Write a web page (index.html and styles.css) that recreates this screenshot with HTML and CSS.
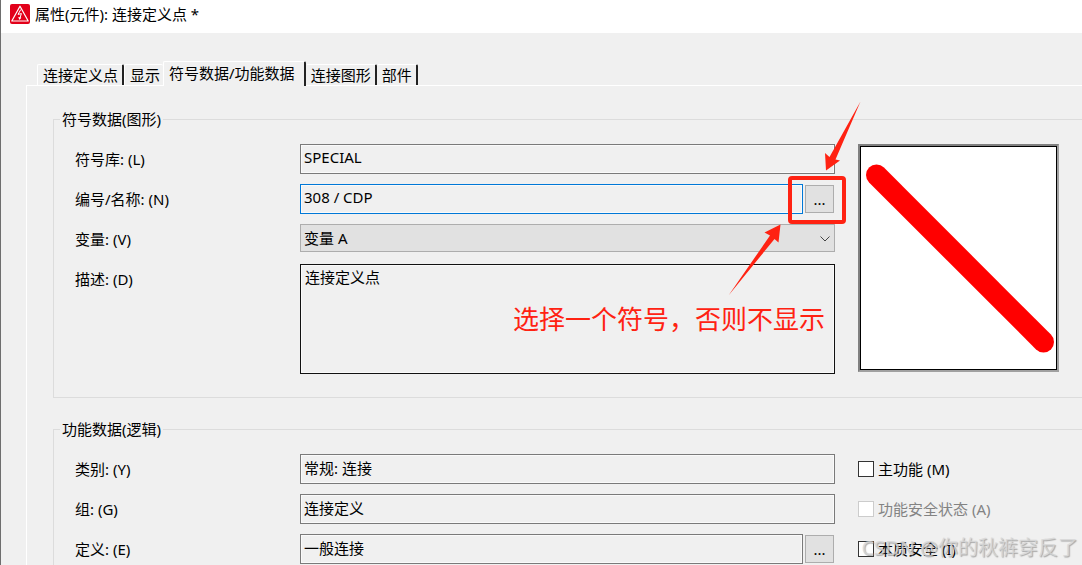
FILE: index.html
```html
<!DOCTYPE html>
<html lang="zh-CN">
<head>
    <meta charset="UTF-8">
    <meta name="viewport" content="width=device-width, initial-scale=1.0">
    <title>属性(元件): 连接定义点 *</title>
    <link rel="stylesheet" href="styles.css">
</head>
<body>
    <div class="dialog">
        <header class="title-bar">
            <svg class="app-icon" width="20" height="20" viewBox="0 0 20 20">
                <rect width="20" height="20" rx="2" fill="#e2001a"></rect>
                <path d="M10 2.2 L18.2 17 H1.8 Z" fill="none" stroke="#fff" stroke-width="1.2" stroke-linejoin="round"></path>
                <path d="M10.8 5.5 L8 10.4 L11.4 9.6 L9.6 15" fill="none" stroke="#fff" stroke-width="1"></path>
                <path d="M8.2 13 L9.5 16 L11.3 13.6 Z" fill="#fff"></path>
            </svg>
            <h1>属性(元件): 连接定义点 *</h1>
        </header>

        <nav class="tabs">
            <button type="button" class="tab">连接定义点</button>
            <button type="button" class="tab">显示</button>
            <button type="button" class="tab active">符号数据/功能数据</button>
            <button type="button" class="tab">连接图形</button>
            <button type="button" class="tab">部件</button>
        </nav>

        <form class="panel">
            <fieldset class="group">
                <legend>符号数据(图形)</legend>
                <div class="group-body">
                    <div class="fields">
                        <div class="row">
                            <label for="library">符号库: (L)</label>
                            <input type="text" id="library" value="SPECIAL" readonly>
                        </div>
                        <div class="row">
                            <label for="symbol">编号/名称: (N)</label>
                            <div class="picker">
                                <input type="text" id="symbol" class="focused" value="308 / CDP">
                                <button type="button" class="browse" aria-label="选择符号">...</button>
                                <div class="highlight"></div>
                                <svg class="arrows" width="150" height="210" viewBox="0 0 150 210">
                                    <path d="M140.500 6.500 L115.500 64.500 L120 65.500 L106 75.500 L105 58 L109.500 62 Z" fill="#ff2212"></path>
                                    <path d="M8.500 200.500 L50 140.500 L44.500 137.500 L60.500 129.500 L58.500 147.500 L54.500 144 Z" fill="#ff2212"></path>
                                </svg>
                            </div>
                        </div>
                        <div class="row">
                            <label for="variant">变量: (V)</label>
                            <div class="select-wrap">
                                <select id="variant">
                                    <option>变量 A</option>
                                </select>
                                <svg class="chevron" width="10" height="6" viewBox="0 0 10 6">
                                    <path d="M0.500 0.500 L5 5 L9.500 0.500" fill="none" stroke="#444"></path>
                                </svg>
                            </div>
                        </div>
                        <div class="row row-top">
                            <label for="description">描述: (D)</label>
                            <div class="description">
                                <textarea id="description">连接定义点</textarea>
                                <p class="note">选择一个符号，否则不显示</p>
                            </div>
                        </div>
                    </div>
                    <div class="preview">
                        <svg viewBox="0 0 194 222" width="194" height="222">
                            <line x1="15" y1="28" x2="182" y2="195" stroke="#f00" stroke-width="21" stroke-linecap="round"></line>
                        </svg>
                    </div>
                </div>
            </fieldset>

            <fieldset class="group">
                <legend>功能数据(逻辑)</legend>
                <div class="group-body">
                    <div class="fields">
                        <div class="row">
                            <label for="category">类别: (Y)</label>
                            <input type="text" id="category" value="常规: 连接" readonly>
                        </div>
                        <div class="row">
                            <label for="group">组: (G)</label>
                            <input type="text" id="group" value="连接定义" readonly>
                        </div>
                        <div class="row">
                            <label for="definition">定义: (E)</label>
                            <div class="picker">
                                <input type="text" id="definition" value="一般连接" readonly>
                                <button type="button" class="browse" aria-label="选择定义">...</button>
                            </div>
                        </div>
                    </div>
                    <div class="options">
                        <label class="check"><input type="checkbox"> 主功能 (M)</label>
                        <label class="check disabled"><input type="checkbox" disabled> 功能安全状态 (A)</label>
                        <label class="check"><input type="checkbox"> 本质安全 (I)</label>
                    </div>
                </div>
            </fieldset>
        </form>
        <div class="watermark">CSDN @你的秋裤穿反了</div>
    </div>
</body>
</html>
```

FILE: styles.css
```css
:root {
    --face: #f0f0f0;
    --button: #e1e1e1;
    --border: #7a7a7a;
    --border-light: #adadad;
    --group-line: #dcdcdc;
    --focus: #0078d7;
    --mark: #ff2212;
}

* {
    margin: 0;
    padding: 0;
    box-sizing: border-box;
}

body {
    font-family: "Noto Sans", "Noto Sans CJK SC", sans-serif;
    font-size: 15px;
    line-height: 20px;
    color: #000;
    background: var(--face);
    overflow: hidden;
}

input, select, textarea, button {
    font: inherit;
    color: inherit;
    border-radius: 0;
    outline: none;
}

.dialog {
    position: relative;
    height: 100vh;
    overflow: hidden;
    border-left: 1px solid #6e6e6e;
}

.title-bar {
    display: flex;
    align-items: center;
    gap: 5px;
    height: 33px;
    padding: 0 9px 5px;
    background: #fff;
}

.title-bar h1 {
    font-size: 15px;
    font-weight: 400;
}

/* tabs */
.tabs {
    display: flex;
    align-items: flex-end;
    height: 52px;
    padding-left: 36px;
}

.tab {
    height: 21px;
    padding: 0 4px 0 5px;
    line-height: 20px;
    background: var(--face);
    border: 0 solid #fff;
    border-top-width: 1px;
    border-left-width: 1px;
    border-right: 2px solid #222;
    border-radius: 2px 2px 0 0;
    white-space: nowrap;
}

.tab:has(+ .active) {
    padding-right: 3px;
    border-right: 0;
}

.tab.active {
    height: 25px;
    margin-bottom: -1px;
    padding: 0 9px 3px 5px;
    z-index: 1;
}

.tab.active ~ .tab {
    padding: 0 4px;
    border-left-color: var(--face);
}

/* panel */
.panel {
    margin-left: 25px;
    padding: 23px 0 0 26px;
    border: 1px solid #fff;
    border-right: 0;
    border-bottom: 0;
}

.group {
    min-width: 0;
    margin: 0 -8px 21px 0;
    padding: 0 30px 23px 21px;
    border: 1px solid var(--group-line);
}

.group legend {
    margin-left: -15px;
    padding: 0 2px;
}

.group-body {
    display: grid;
    grid-template-columns: 1fr 201px;
    gap: 23px;
    padding-top: 15px;
}

.fields {
    display: flex;
    flex-direction: column;
    gap: 10px;
}

.row {
    display: grid;
    grid-template-columns: 225px 1fr;
    align-items: center;
    height: 30px;
}

.row-top {
    align-items: start;
    height: 110px;
}

.row-top label {
    padding-top: 5px;
}

input[type="text"] {
    width: 100%;
    min-width: 0;
    height: 30px;
    padding: 0 3px 4px;
    background: var(--face);
    border: 1px solid var(--border);
    box-shadow: inset 0 0 0 1px #fafafa;
}

input.focused {
    border-color: var(--focus);
}

.picker {
    position: relative;
    z-index: 1;
    display: flex;
    align-items: center;
    gap: 2px;
    padding-right: 1px;
}

.browse {
    flex: none;
    width: 29px;
    height: 28px;
    background: var(--button);
    border: 1px solid var(--border-light);
}

.select-wrap {
    position: relative;
    align-self: start;
}

select {
    display: block;
    width: 100%;
    height: 28px;
    padding: 0 3px;
    appearance: none;
    background: var(--button);
    border: 1px solid var(--border-light);
}

.chevron {
    position: absolute;
    top: 12px;
    right: 5px;
}

.description {
    position: relative;
    height: 110px;
}

textarea {
    display: block;
    width: 100%;
    height: 110px;
    padding: 2px 4px;
    background: var(--face);
    border: 1px solid #111;
    box-shadow: inset 0 0 0 1px #fafafa;
    resize: none;
}

/* symbol preview */
.preview {
    height: 228px;
    background: #fff;
    border: 2px solid #808080;
    border-right-color: #a0a0a0;
    border-bottom-color: #a0a0a0;
}

.preview svg {
    display: block;
    width: 100%;
    height: 100%;
    border: 1px solid #000;
}

/* check boxes */
.options {
    display: flex;
    flex-direction: column;
    gap: 10px;
}

.check {
    display: flex;
    align-items: center;
    gap: 4px;
    height: 30px;
}

.check input {
    width: 16px;
    height: 16px;
    appearance: none;
    background: #fff;
    border: 1px solid #333;
}

.check.disabled {
    color: #838383;
}

.check.disabled input {
    border-color: #ccc;
}

/* red marks over the form */
.highlight {
    position: absolute;
    top: -8px;
    right: -11px;
    width: 58px;
    height: 48px;
    border: 4px solid var(--mark);
    border-radius: 4px;
}

.arrows {
    position: absolute;
    top: -89px;
    right: -35px;
    pointer-events: none;
}

.note {
    position: absolute;
    top: 37px;
    right: 10px;
    font-size: 26px;
    line-height: 36px;
    color: var(--mark);
    white-space: nowrap;
}

.watermark {
    position: absolute;
    right: 4px;
    bottom: 2px;
    z-index: 2;
    font-size: 20px;
    line-height: 30px;
    color: rgba(215, 215, 215, 0.8);
    text-shadow: 1px 1px 1px rgba(120, 120, 120, 0.6);
    white-space: nowrap;
    pointer-events: none;
}
```
